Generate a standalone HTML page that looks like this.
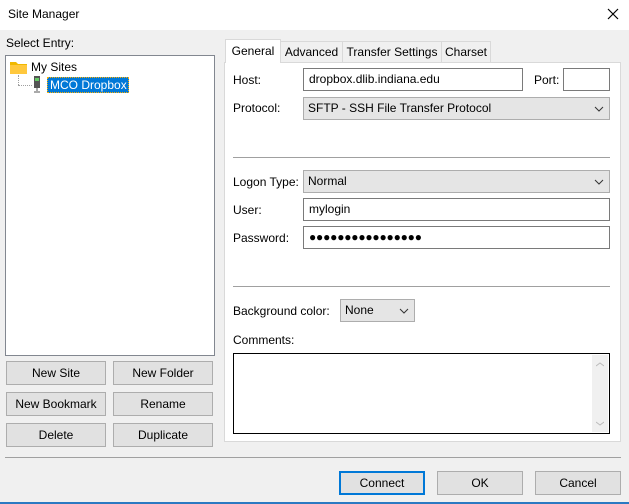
<!DOCTYPE html>
<html><head><style>
*{box-sizing:border-box;margin:0;padding:0}
body{width:629px;height:504px;background:#f0f0f0;font-family:"Liberation Sans",sans-serif;font-size:12px;color:#000;position:relative;overflow:hidden}
.a{position:absolute}
.btn{position:absolute;background:#e1e1e1;border:1px solid #adadad;text-align:center;line-height:22px;font-size:12px}
.inp{position:absolute;background:#fff;border:1px solid #7a7a7a;padding-left:5px;line-height:20px;font-size:12px}
.cmb{position:absolute;background:#e5e5e5;border:1px solid #adadad;padding-left:4px;line-height:21px;font-size:12px}
.cmb svg{position:absolute;right:5px;top:8px}
.sep{position:absolute;height:1px;background:#a0a0a0}
.tab{position:absolute;top:41px;height:21px;border:1px solid #d9d9d9;border-bottom:none;background:#f0f0f0;line-height:20px;text-align:center;font-size:12px}
</style></head><body>
<div class="a" style="left:0;top:0;width:629px;height:30px;background:#fff"></div>
<div class="a" style="left:8px;top:7px;font-size:12px">Site Manager</div>
<svg class="a" style="left:607px;top:8px" width="12" height="12"><path d="M1 1L11 11M11 1L1 11" stroke="#000" stroke-width="1.2"/></svg>
<div class="a" style="left:6px;top:36px">Select Entry:</div>
<div class="a" style="left:5px;top:55px;width:210px;height:301px;background:#fff;border:1px solid #828790"></div>
<svg class="a" style="left:10px;top:60px" width="18" height="14"><path d="M0 2h6l2 2h9v10H0z" fill="#f0b800"/><path d="M0 5h17v9H0z" fill="#ffc83d"/></svg>
<div class="a" style="left:31px;top:60px">My Sites</div>
<div class="a" style="left:18px;top:75px;width:1px;height:10px;border-left:1px dotted #a0a0a0"></div>
<div class="a" style="left:18px;top:85px;width:14px;height:1px;border-top:1px dotted #a0a0a0"></div>
<svg class="a" style="left:33px;top:76px" width="8" height="17"><rect x="1" y="0" width="6" height="12" fill="#555"/><rect x="2" y="2" width="4" height="3" fill="#6c6"/><path d="M4 12v3M1 16h6" stroke="#555"/></svg>
<div class="a" style="left:47px;top:77px;width:82px;height:16px;background:#0078d7;color:#fff;border:1px dotted #ffb000;line-height:14px;padding-left:2px">MCO Dropbox</div>
<div class="btn" style="left:6px;top:361px;width:100px;height:24px">New Site</div>
<div class="btn" style="left:113px;top:361px;width:100px;height:24px">New Folder</div>
<div class="btn" style="left:6px;top:392px;width:100px;height:24px">New Bookmark</div>
<div class="btn" style="left:113px;top:392px;width:100px;height:24px">Rename</div>
<div class="btn" style="left:6px;top:423px;width:100px;height:24px">Delete</div>
<div class="btn" style="left:113px;top:423px;width:100px;height:24px">Duplicate</div>
<div class="a" style="left:224px;top:62px;width:397px;height:380px;background:#fff;border:1px solid #d9d9d9"></div>
<div class="tab" style="left:280px;width:63px">Advanced</div>
<div class="tab" style="left:342px;width:100px">Transfer Settings</div>
<div class="tab" style="left:441px;width:50px">Charset</div>
<div class="tab" style="left:225px;top:39px;width:56px;height:24px;background:#fff;line-height:22px">General</div>
<div class="a" style="left:233px;top:73px">Host:</div>
<div class="inp" style="left:303px;top:68px;width:220px;height:23px">dropbox.dlib.indiana.edu</div>
<div class="a" style="left:534px;top:73px">Port:</div>
<div class="inp" style="left:563px;top:68px;width:47px;height:23px"></div>
<div class="a" style="left:233px;top:101px">Protocol:</div>
<div class="cmb" style="left:303px;top:97px;width:307px;height:23px">SFTP - SSH File Transfer Protocol<svg width="10" height="6"><path d="M1 1l4 4 4-4" stroke="#333" fill="none"/></svg></div>
<div class="sep" style="left:233px;top:157px;width:377px"></div>
<div class="a" style="left:233px;top:175px">Logon Type:</div>
<div class="cmb" style="left:303px;top:170px;width:307px;height:23px">Normal<svg width="10" height="6"><path d="M1 1l4 4 4-4" stroke="#333" fill="none"/></svg></div>
<div class="a" style="left:233px;top:203px">User:</div>
<div class="inp" style="left:303px;top:198px;width:307px;height:23px">mylogin</div>
<div class="a" style="left:233px;top:231px">Password:</div>
<div class="inp" style="left:303px;top:226px;width:307px;height:23px;letter-spacing:-0.2px">●●●●●●●●●●●●●●●●</div>
<div class="sep" style="left:233px;top:286px;width:377px"></div>
<div class="a" style="left:233px;top:304px">Background color:</div>
<div class="cmb" style="left:340px;top:299px;width:75px;height:23px">None<svg width="10" height="6"><path d="M1 1l4 4 4-4" stroke="#333" fill="none"/></svg></div>
<div class="a" style="left:233px;top:333px">Comments:</div>
<div class="a" style="left:233px;top:353px;width:377px;height:81px;background:#fff;border:1px solid #000"></div>
<div class="a" style="left:592px;top:355px;width:16px;height:77px;background:#f0f0f0"></div>
<svg class="a" style="left:596px;top:362px" width="8" height="5"><path d="M0 4l4-3 4 3" stroke="#bbb" fill="none"/></svg>
<svg class="a" style="left:596px;top:421px" width="8" height="5"><path d="M0 1l4 3 4-3" stroke="#bbb" fill="none"/></svg>
<div class="sep" style="left:5px;top:457px;width:616px"></div>
<div class="btn" style="left:339px;top:471px;width:86px;height:24px;border:2px solid #0078d7;line-height:20px">Connect</div>
<div class="btn" style="left:437px;top:471px;width:86px;height:24px">OK</div>
<div class="btn" style="left:535px;top:471px;width:86px;height:24px">Cancel</div>
<div class="a" style="left:0;top:502px;width:629px;height:2px;background:#2b79c2"></div>
</body></html>
